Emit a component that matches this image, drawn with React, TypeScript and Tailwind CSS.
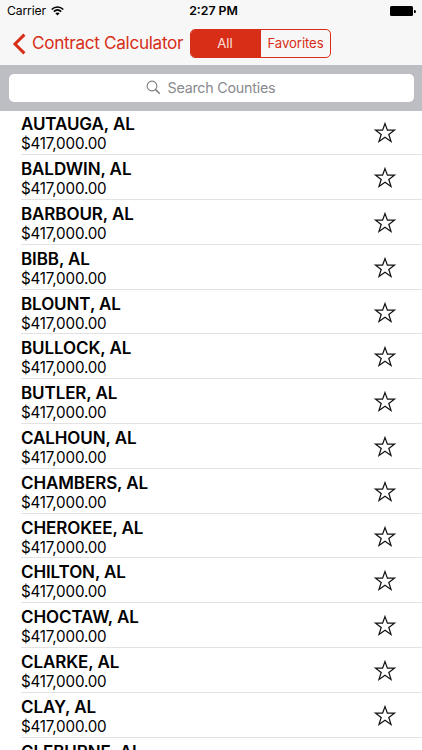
const counties = [
  'AUTAUGA', 'BALDWIN', 'BARBOUR', 'BIBB', 'BLOUNT', 'BULLOCK', 'BUTLER', 'CALHOUN',
  'CHAMBERS', 'CHEROKEE', 'CHILTON', 'CHOCTAW', 'CLARKE', 'CLAY', 'CLEBURNE',
];

function Star() {
  return (
    <svg width="24" height="24" viewBox="0 0 24 24" fill="none" stroke="#111" strokeWidth="1.25" strokeLinejoin="miter" aria-label="Add to favorites">
      <path d="M12 3.6 L14.4 10.2 H21.4 L15.8 14.4 L18 21.4 L12 17.2 L6 21.4 L8.2 14.4 L2.6 10.2 H9.6 Z" />
    </svg>
  );
}

function StatusBar() {
  return (
    <div className="grid h-[22px] grid-cols-3 items-center pl-[7px] pr-[6px] text-[12.5px] leading-[22px] text-black">
      <div className="flex items-center gap-[6px]">
        <span className="w-[38px] whitespace-nowrap text-[12.2px] tracking-[-0.15px]">Carrier</span>
        <svg width="13" height="10" viewBox="0 0 13 10" fill="none" stroke="#000" strokeWidth="1.6">
          <path d="M.7 3.5C4 .2 9 .2 12.3 3.5" />
          <path d="M2.8 5.7C5 3.6 8 3.6 10.2 5.7" />
          <path d="M6.5 9.4 4.4 7.3C5.6 6.3 7.4 6.3 8.6 7.3Z" fill="#000" stroke="none" />
        </svg>
      </div>
      <span className="pl-[4px] text-center text-[12.3px] font-semibold">2:27 PM</span>
      <div className="flex items-center justify-end gap-px">
        <div className="h-[10px] w-[23px] rounded-[1.5px] bg-black" />
        <div className="h-[3px] w-[1.5px] rounded-r-full bg-black" />
      </div>
    </div>
  );
}

export default function App() {
  return (
    <div className="h-[750px] w-[422px] overflow-hidden bg-white font-['Inter',sans-serif] text-black">
      <header className="h-[65px] bg-[#f7f7f7]">
        <StatusBar />
        <nav className="flex h-[43px] items-center pl-[12px]">
          <svg width="14" height="22" viewBox="0 0 14 22" fill="none" stroke="#d82e18" strokeWidth="3">
            <path d="M12.4 1.6 3 11l9.4 9.4" />
          </svg>
          <span className="mb-[2px] ml-[6px] w-[158px] whitespace-nowrap text-[17.2px] tracking-[-0.33px] text-[#d82e18]">Contract Calculator</span>
          <div className="flex h-[29px] w-[141px] overflow-hidden rounded-[5px] border border-[#d82e18] text-[13.2px] text-[#d82e18]">
            <div className="flex w-[70px] items-center justify-center bg-[#d82e18] pr-[2px] text-[#fbe0dc]">All</div>
            <div className="flex flex-1 items-center justify-center tracking-[-0.1px]">Favorites</div>
          </div>
        </nav>
      </header>
      <div className="h-[45.5px] bg-[#bdbdc4] px-[8.5px] pt-[8.5px]">
        <div className="flex h-[28.5px] items-center rounded-[5px] bg-white pl-[137px] text-[#8a8a8f]">
          <svg width="15" height="15" viewBox="0 0 15 15" fill="none" stroke="#7d7d82" strokeWidth="1.1">
            <circle cx="6" cy="6" r="4.9" />
            <path d="m9.6 9.6 4.2 4.2" strokeWidth="1.5" />
          </svg>
          <span className="ml-[7px] whitespace-nowrap pb-px text-[14.3px] tracking-[-0.24px]">Search Counties</span>
        </div>
      </div>
      <main>
        {counties.map((name) => (
          <div key={name} className="flex h-[44.8px] pl-[21px]">
            <div className="flex flex-1 items-center justify-between border-b border-[#e2e2e4] pr-[25px]">
              <div className="whitespace-nowrap pt-[2px]">
                <div className="h-[19px] text-[17px] font-semibold leading-[20px] tracking-[-0.1px]">{name}, AL</div>
                <div className="h-[19px] text-[15.2px] leading-[21.5px] tracking-[-0.2px]">$417,000.00</div>
              </div>
              <Star />
            </div>
          </div>
        ))}
      </main>
    </div>
  );
}
